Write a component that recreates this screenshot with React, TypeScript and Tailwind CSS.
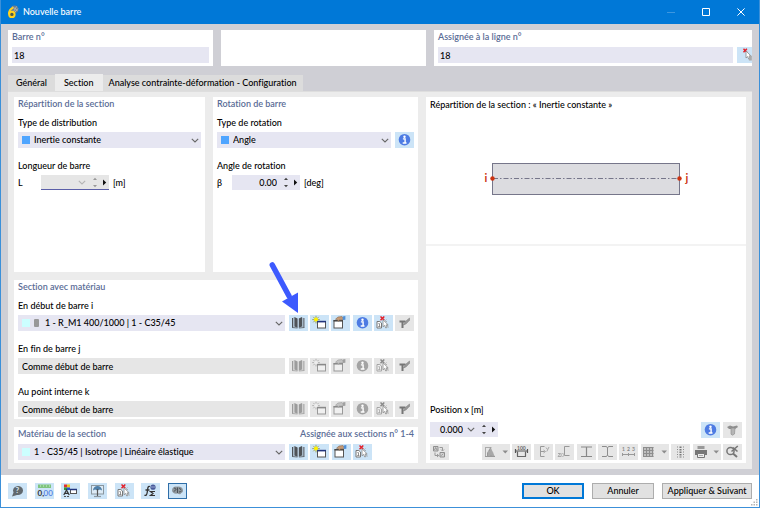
import type { ReactNode } from "react";

type Tone = "on" | "off";

const strong = (t: Tone) => (t === "on" ? "#4f5358" : "#9c9c9c");
const paper = (t: Tone) => (t === "on" ? "#ffffff" : "#f0f0f0");

function Glyph({ children, w = 19 }: { children: ReactNode; w?: number }) {
  return (
    <svg width={w} height={16} viewBox={`0 0 ${w} 16`} fill="none" aria-hidden="true" className="block shrink-0">
      {children}
    </svg>
  );
}

function BookIcon({ tone = "on" as Tone }) {
  const c = strong(tone);
  return (
    <Glyph>
      <path d="M3.5 3v9.5M14.900 3v9.500" stroke={c} strokeWidth="1" />
      <path d="M4.700 2.600v9.500M13.700 2.600v9.500" stroke={c} strokeWidth=".6" opacity=".6" />
      <path d="M5.400 2l3.200 1.400v9.400L5.400 11.400z" fill={c} />
      <path d="M13 2L9.800 3.400v9.400l3.200-1.400z" fill={c} />
      <path d="M3 12.500l5.500.5M15.400 12.500l-5.500.5" stroke={c} strokeWidth=".8" />
    </Glyph>
  );
}

function NewIcon({ tone = "on" as Tone }) {
  const on = tone === "on";
  return (
    <Glyph>
      <path d="M6 .800v7.600M2.200 4.600h7.600M3.300 1.900l5.400 5.400M8.700 1.900L3.300 7.300" stroke={on ? "#8f9440" : "#a5a5a5"} strokeWidth=".8" />
      <rect x="7.500" y="6.500" width="8" height="6.500" fill={paper(tone)} stroke={on ? "#555" : "#999"} />
      <path d="M7 6.600h9" stroke={on ? "#22357e" : "#8a8a8a"} strokeWidth="1.600" />
      <circle cx="6" cy="4.600" r="2" fill={on ? "#fff200" : "#ededed"} />
    </Glyph>
  );
}

function EditIcon({ tone = "on" as Tone }) {
  const on = tone === "on";
  return (
    <Glyph>
      <rect x="3" y="5.500" width="8.500" height="7.500" fill={paper(tone)} stroke={on ? "#555" : "#999"} />
      <path d="M2.500 5.800h9.500" stroke={on ? "#444" : "#8a8a8a"} strokeWidth="1.500" />
      <path d="M4.500 4.200L7 2l4-.4 1.600 1.600-1 1.600-3 .2-1.400 1.200-.8-1.600z" fill={on ? "#c79a74" : "#c4c4c4"} stroke={on ? "#85664e" : "#999"} strokeWidth=".6" />
      <path d="M11.600 1.600l2.800-.6v3.800l-2.600.2z" fill={on ? "#4f8fd6" : "#a0a0a0"} />
    </Glyph>
  );
}

function InfoIcon({ tone = "on" as Tone }) {
  return (
    <Glyph>
      <circle cx="9.500" cy="7.700" r="5.800" fill={tone === "on" ? "#4d7be3" : "#a3a3a3"} />
      <circle cx="9.500" cy="4.700" r="1.200" fill="#fff" />
      <path d="M7.900 6.900h2.200v3.800M7.700 11h3.800" stroke="#fff" strokeWidth="1.400" />
    </Glyph>
  );
}

function Cursor({ x, y }: { x: number; y: number }) {
  return (
    <path
      transform={`translate(${x} ${y})`}
      d="M0 0v7l1.600-1.400 1.200 2.600 1.300-.6L3 5.100h2.200z"
      fill="#fff"
      stroke="#888"
      strokeWidth=".8"
    />
  );
}

function PickIcon({ tone = "on" as Tone }) {
  const on = tone === "on";
  return (
    <Glyph>
      <path d="M3 6.500h2.800L7.500 8v5H3z" fill={paper(tone)} stroke={on ? "#777" : "#a5a5a5"} />
      <path d="M4.300 8.600h1.200v3M4.200 11.500h2.200" stroke={on ? "#777" : "#a5a5a5"} strokeWidth=".8" />
      <path d="M6.500 1.500l3.800 3.800M10.300 1.500L6.500 5.300" stroke={on ? "#e3212b" : "#8a8a8a"} strokeWidth="1.500" />
      <path d="M12.500 4.500l-1.300 1.300M13 6.500h-1.500M13 10l1.500 2.500" stroke="#999" strokeWidth=".7" />
      <Cursor x={9} y={4.800} />
    </Glyph>
  );
}

function AssignIcon() {
  return (
    <Glyph>
      <path d="M6.500 1.800l3.400 3.400M9.900 1.800L6.500 5.200" stroke="#e3212b" strokeWidth="1.500" />
      <Cursor x={9} y={4} />
      <path d="M12.500 8l2.300 1v4.600h-2.900z" fill="#aaa" />
    </Glyph>
  );
}

function TaperIcon() {
  return (
    <Glyph>
      <path d="M4.500 5.500h6v2h-2V13H6.500V7.500h-2z" fill="#767676" />
      <path d="M8.500 10l2-3.600L14.500 3v2.200l-3.300 3.600z" fill="#9a9a9a" stroke="#777" strokeWidth=".5" />
    </Glyph>
  );
}

function Caret() {
  return <path d="M20.500 6.500h5.500l-2.750 3z" fill="#8c8c8c" />;
}

function IconButton({
  label,
  children,
  tone = "on",
  wide = false,
  framed = false,
}: {
  label: string;
  children: ReactNode;
  tone?: Tone;
  wide?: boolean;
  framed?: boolean;
}) {
  return (
    <button
      type="button"
      aria-label={label}
      title={label}
      className={[
        "flex h-4 shrink-0 items-center justify-center overflow-hidden",
        wide ? "w-7" : "w-[19px]",
        tone === "on" ? "bg-[#cce4f7]" : "bg-[#e6e6e6]",
        framed ? "outline outline-1 -outline-offset-1 outline-[#2f6ea8]" : "",
      ].join(" ")}
    >
      {children}
    </button>
  );
}

function Chevron({ faded = false }: { faded?: boolean }) {
  return (
    <svg width="8" height="5" viewBox="0 0 8 5" fill="none" aria-hidden="true" className="shrink-0">
      <path d="M.8.8L4 4 7.200.8" stroke={faded ? "#b4b4b4" : "#666"} strokeWidth="1.100" />
    </svg>
  );
}

function Select({ id, value, swatches, label }: { id: string; value: string; swatches: ReactNode; label?: string }) {
  return (
    <div className="relative h-4 min-w-0 flex-1">
      <select
        id={id}
        aria-label={label}
        className={[
          "block h-4 w-full appearance-none bg-[#e6e6f2] pr-4 leading-4 text-black outline-none",
          id === "section-i" ? "pl-[27px]" : "pl-4",
        ].join(" ")}
      >
        <option>{value}</option>
      </select>
      <span className="pointer-events-none absolute inset-y-0 left-1 flex items-center gap-1">{swatches}</span>
      <span className="pointer-events-none absolute inset-y-0 right-0.5 flex items-center">
        <Chevron />
      </span>
    </div>
  );
}

function Spin({ id, value, dropdown = false, disabled = false }: { id: string; value: string; dropdown?: boolean; disabled?: boolean }) {
  return (
    <div
      className={[
        "flex h-[15px] w-[68px] items-center gap-1 pr-0.5",
        disabled ? "border-b border-[#5b5fa8] bg-[#e6e6e6]" : "bg-[#e6e6f2]",
      ].join(" ")}
    >
      <input
        id={id}
        defaultValue={value}
        disabled={disabled}
        className="h-full w-0 min-w-0 flex-1 bg-transparent text-right outline-none"
      />
      {dropdown && <Chevron faded={disabled} />}
      <svg width="17" height="11" viewBox="0 0 17 11" aria-hidden="true" className="shrink-0">
        <path d="M3 3L5 .8 7 3zM3 8l2 2.200L7 8z" fill={disabled ? "#999" : "#444"} />
        <path d="M13 2.600v6l3.200-3z" fill="#111" />
      </svg>
    </div>
  );
}

const blue = <span className="size-2 bg-[#4fa5ff]" />;
const cyan = <span className="size-2 bg-[#ccffff]" />;

function Heading({ children }: { children: ReactNode }) {
  return <h2 className="h-3.5 font-semibold leading-[14px] text-[#5a6c96]">{children}</h2>;
}

function FieldLabel({ htmlFor, children }: { htmlFor: string; children: ReactNode }) {
  return (
    <label htmlFor={htmlFor} className="mb-0.5 block h-3.5 leading-[14px]">
      {children}
    </label>
  );
}

function SectionTools({ tone }: { tone: Tone }) {
  return (
    <div className="flex w-[125px] shrink-0 justify-between">
      <IconButton label="Bibliothèque" tone={tone}><BookIcon tone={tone} /></IconButton>
      <IconButton label="Nouveau" tone={tone}><NewIcon tone={tone} /></IconButton>
      <IconButton label="Modifier" tone={tone}><EditIcon tone={tone} /></IconButton>
      <IconButton label="Informations" tone={tone}><InfoIcon tone={tone} /></IconButton>
      <IconButton label="Sélectionner" tone={tone}><PickIcon tone={tone} /></IconButton>
      <IconButton label="Variation" tone="off"><TaperIcon /></IconButton>
    </div>
  );
}

function TitleBar() {
  return (
    <header className="flex h-6 shrink-0 items-center bg-[#0078d7] pl-[6px] pr-3.5 text-white">
      <svg width="12" height="14" viewBox="0 0 12 14" fill="none" aria-hidden="true" className="mr-1">
        <circle cx="7.500" cy="4.200" r="3.800" fill="#6d7f8c" />
        <path d="M5.500 1.600l5 4M9.600 1.400l-3 5M11 3.500l-3 3.500" stroke="#b9c4ca" strokeWidth=".7" />
        <path d="M6.300 2.600C3.100 4 1.800 6.600 2 9.400" stroke="#ffd21f" strokeWidth="2" />
        <circle cx="4.900" cy="9.400" r="2.700" stroke="#ffd21f" strokeWidth="2" fill="#4a5a4a" />
      </svg>
      <h1 className="flex-1">Nouvelle barre</h1>
      <div className="flex gap-[27px]">
        <button type="button" aria-label="Réduire" disabled>
          <svg width="8" height="8" viewBox="0 0 8 8"><path d="M0 4.500h8" stroke="#3d97e0" /></svg>
        </button>
        <button type="button" aria-label="Agrandir">
          <svg width="8" height="8" viewBox="0 0 8 8"><path d="M.5.5h7v7h-7z" stroke="#fff" fill="none" /></svg>
        </button>
        <button type="button" aria-label="Fermer">
          <svg width="8" height="8" viewBox="0 0 8 8"><path d="M.4.4l7.200 7.200M7.600.4L.4 7.600" stroke="#fff" /></svg>
        </button>
      </div>
    </header>
  );
}

function Preview() {
  return (
    <section className="flex flex-col bg-white">
      <div className="h-[149px] border-b-2 border-[#f3f3f3] px-1 pt-px">
        <h2 className="leading-[14px]">Répartition de la section : « Inertie constante »</h2>
        <svg viewBox="0 0 312 60" className="mt-[35px] block w-full" role="img" aria-label="Barre i – j">
          <rect x="62.500" y="16.500" width="187" height="31" fill="#dcdce0" stroke="#76768a" />
          <path d="M63 31.500h186" stroke="#76768a" strokeDasharray="5 2 1.500 2" />
          <circle cx="62.500" cy="31.500" r="2.200" fill="#cc3311" />
          <circle cx="249.500" cy="31.500" r="2.200" fill="#cc3311" />
          <text x="54.500" y="35" fontSize="11" fontWeight="700" fill="#cc3311">i</text>
          <text x="255.500" y="35" fontSize="11" fontWeight="700" fill="#cc3311">j</text>
        </svg>
      </div>
      <div className="min-h-0 flex-1" />
      <div className="flex flex-col px-1 pb-[3px]">
        <label htmlFor="position" className="mb-[5px] h-3.5 leading-[14px]">Position x [m]</label>
        <div className="flex">
          <Spin id="position" value="0.000" dropdown />
          <div className="ml-auto flex gap-[3px]">
            <IconButton label="Informations"><InfoIcon /></IconButton>
            <IconButton label="Afficher" tone="off">
              <Glyph>
                <path d="M4 5l3-1.500 3 1 4-1 1 1.500-3 2H6z" fill="#8f8f8f" />
                <path d="M8 6h4l-.500 6-2 1.200-1.500-1z" fill="#b5b5b5" stroke="#888" strokeWidth=".6" />
              </Glyph>
            </IconButton>
          </div>
        </div>
        <div className="mt-1.5 flex justify-between">
          <IconButton label="Échanger" tone="off">
            <Glyph>
              <path d="M3.500 2.500h4.500v4.500H3.500zM10 8.500h4.500V13H10z" stroke="#8f8f8f" fill="#d4d4d4" />
              <path d="M4.500 6l1.200-2.500L7 6M11.200 11.700l2-2" stroke="#888" strokeWidth=".8" />
              <path d="M9.500 3.500h3v3M11 5.500l1.500 1.500L14 5.500M5 8.500v3h3.500M7 10l1.700 1.500L7 13" stroke="#999" />
            </Glyph>
          </IconButton>
          <div className="flex w-[260px] justify-between">
            <IconButton label="Contraintes" tone="off" wide>
              <Glyph w={28}>
                <path d="M3 3.500h6.500M3.500 3v9" stroke="#aaa" />
                <path d="M3 12.500h10" stroke="#999" />
                <path d="M5 12V9l3.500-6 4 9z" fill="#999" />
                <path d="M9 4.500v7M7 7v5M11 8v4" stroke="#c4c4c4" strokeWidth=".7" />
                <Caret />
              </Glyph>
            </IconButton>
            <IconButton label="Dimensions" tone="off">
              <Glyph>
                <text x="5" y="5.500" fontSize="5" fontWeight="700" fill="#666">100</text>
                <path d="M3 7h13M3.500 5v4M15.500 5v4" stroke="#555" strokeWidth="1.200" />
                <path d="M5 12.500h9M5.500 7.500v5M13.500 7.500v5" stroke="#666" strokeWidth="1.200" />
              </Glyph>
            </IconButton>
            <IconButton label="Axes y z" tone="off">
              <Glyph>
                <path d="M10.500 2.500h-4v10h4M6.500 7.500h4" stroke="#999" />
                <path d="M12 3.500l1.300 1.800M15 3l-2.200 4.500M9.500 6l2 1.500-2 1.500" stroke="#999" strokeWidth=".8" />
              </Glyph>
            </IconButton>
            <IconButton label="Axes principaux" tone="off">
              <Glyph>
                <path d="M14.500 2.500H9.500v9h5" stroke="#999" />
                <path d="M3 9.500h2.500L3 12.500h3" stroke="#999" strokeWidth=".8" />
                <circle cx="7.500" cy="11" r="1.500" stroke="#aaa" strokeWidth=".8" />
              </Glyph>
            </IconButton>
            <IconButton label="Profil" tone="off">
              <Glyph><path d="M4 3h11M4 12.500h11M9.500 3v9" stroke="#888" strokeWidth="1.200" /></Glyph>
            </IconButton>
            <IconButton label="Contour" tone="off">
              <Glyph><path d="M4 2.500h4.500l1 1.500 1-1.500H15M4 12.500h4.500l1-1.500 1 1.500H15M9.500 4v7" stroke="#8c8c8c" /></Glyph>
            </IconButton>
            <IconButton label="Numérotation" tone="off">
              <Glyph>
                <path d="M3 10.500h13M3.500 9v3M9.500 9v3M15.500 9v3" stroke="#999" />
                <text x="3" y="7" fontSize="5" fontWeight="700" fill="#888">1</text>
                <text x="8" y="7" fontSize="5" fontWeight="700" fill="#888">2</text>
                <text x="13" y="7" fontSize="5" fontWeight="700" fill="#888">3</text>
              </Glyph>
            </IconButton>
            <IconButton label="Grille" tone="off" wide>
              <Glyph w={28}>
                <path d="M2.500 3h10v10h-10z" fill="#c0c0c0" />
                <path d="M2 3.500h10.500M2 6.500h10.500M2 9.500h10.500M2 12.500h10.500M2.500 3v10M5.500 3v10M8.500 3v10M11.500 3v10" stroke="#8d8d8d" />
                <Caret />
              </Glyph>
            </IconButton>
            <IconButton label="Points" tone="off">
              <Glyph>
                <path d="M9.500 2.500v11" stroke="#777" strokeWidth="2" strokeDasharray="1.500 1" />
                <path d="M6.500 2.500v11M12.500 2.500v11" stroke="#8c8c8c" strokeDasharray="1 1.500" />
              </Glyph>
            </IconButton>
            <IconButton label="Imprimer" tone="off" wide>
              <Glyph w={28}>
                <path d="M4.500 2h7v3h-7z" fill="#999" />
                <path d="M2 6h12v5H2z" fill="#777" />
                <path d="M4.500 9.500h7v4h-7z" fill="#eee" stroke="#777" />
                <path d="M6 11.500h4" stroke="#999" strokeWidth=".8" />
                <Caret />
              </Glyph>
            </IconButton>
            <IconButton label="Réinitialiser le zoom" tone="off">
              <Glyph>
                <circle cx="7.500" cy="7" r="3.600" stroke="#777" strokeWidth="1.500" />
                <path d="M10 9.500l4 3.500" stroke="#777" strokeWidth="2" />
                <path d="M10 3.500l4.500 4M14.800 2L8.500 7.500" stroke="#777" strokeWidth="1.600" />
              </Glyph>
            </IconButton>
          </div>
        </div>
      </div>
    </section>
  );
}

function Footer() {
  return (
    <footer className="relative flex h-8 shrink-0 items-center bg-white px-[7px]">
      <div className="flex w-[179px] justify-between">
        <IconButton label="Aide">
          <Glyph>
            <path d="M4 13.500l1.500-4a5 4.500 0 1 1 3.500 2.500z" fill="#60686e" />
            <text x="7.500" y="10" fontSize="8" fontWeight="700" fill="#dbe8f2">?</text>
          </Glyph>
        </IconButton>
        <IconButton label="Unités">
          <Glyph>
            <rect x="3" y="1.500" width="13" height="3.500" fill="#7fc47f" />
            <path d="M5.500 2v2M8.500 2v2M11.500 2v2M14.500 2v2" stroke="#b7e3b7" strokeWidth=".7" />
            <text x="2.500" y="13" fontSize="8" fontWeight="700" fill="#333">0,</text>
            <text x="8.500" y="13" fontSize="8" fill="#4b78e0">00</text>
          </Glyph>
        </IconButton>
        <IconButton label="Couleurs">
          <Glyph>
            <path d="M3 1.500h3v3H3z" fill="#e03030" /><path d="M6 1.500h3v3H6z" fill="#eac71f" />
            <path d="M3 4.500h3v2.500H3z" fill="#2e9a3c" /><path d="M6 4.500h3v2.500H6z" fill="#2b50c8" />
            <path d="M2.800 12l2.700-5L8.200 12M4 10.300h3" stroke="#333" strokeWidth="1.200" />
            <path d="M3 13.500h6" stroke="#555" strokeDasharray="2 1" />
            <rect x="9.500" y="6.500" width="6" height="4" fill="#fff" stroke="#555" />
            <path d="M9 6.500h7" stroke="#22357e" strokeWidth="1.500" />
          </Glyph>
        </IconButton>
        <IconButton label="Affichage">
          <Glyph>
            <rect x="3.500" y="2.500" width="12" height="8.500" fill="#dceaf5" stroke="#8b979f" />
            <path d="M5 7.500a4.500 4.500 0 0 1 9 0l-2-1-2.500 1-2.500-1z" fill="#4f7fa8" />
            <path d="M9.500 6v7" stroke="#555" strokeWidth="1.200" />
            <path d="M6 13.500h7" stroke="#8b979f" strokeWidth="1.200" />
          </Glyph>
        </IconButton>
        <IconButton label="Sélection"><PickIcon /></IconButton>
        <IconButton label="Fonctions">
          <Glyph>
            <path d="M9 3.500C6.500 2.500 6.800 6 6.300 9S5 13 3.500 12M4.500 7h4" stroke="#333" strokeWidth="1.300" />
            <path d="M14 8.500H9.500l2.500 2-2.500 2H14" stroke="#333" strokeWidth="1.200" />
            <circle cx="12" cy="4.200" r="2.600" fill="#4a5b9a" />
            <path d="M10 4h4" stroke="#a9b6e0" strokeWidth=".8" />
          </Glyph>
        </IconButton>
        <IconButton label="Assistant" framed>
          <Glyph>
            <path d="M4 7.500c0-3 2.500-4.300 5-3.800C12 3 15 4.800 15 7.500c0 2-1.500 2-2.500 3.500-1 .8-2-.2-3-.5C7 11 4 10 4 7.500z" fill="#8d959b" />
            <path d="M6 5.500c1-1 2 0 2 1s-2 1-2 2M9.500 4.500v5.500M11 5.500c1-.5 2 .5 1.500 1.500M11 9c1 0 2-.5 2.500-1" stroke="#454b50" strokeWidth=".9" />
          </Glyph>
        </IconButton>
      </div>
      <div className="ml-auto flex h-4 gap-2">
        <button type="button" className="w-[62px] border-2 border-[#0078d7] bg-[#e1e1e1] leading-3">OK</button>
        <button type="button" className="w-[62px] border border-[#adadad] bg-[#e1e1e1] leading-[14px]">Annuler</button>
        <button type="button" className="w-[90px] whitespace-nowrap border border-[#adadad] bg-[#e1e1e1] leading-[14px]">Appliquer &amp; Suivant</button>
      </div>
      <svg width="7" height="7" viewBox="0 0 7 7" aria-hidden="true" className="absolute bottom-px right-px">
        <path d="M5 0h1.500v1.500H5zM5 2.500h1.500V4H5zM5 5h1.500v1.500H5zM2.500 2.500H4V4H2.500zM2.500 5H4v1.500H2.500zM0 5h1.500v1.500H0z" fill="#b5b5b5" />
      </svg>
    </footer>
  );
}

export default function App() {
  return (
    <div className="flex min-h-screen flex-col border border-t-0 border-[#3c90d9] bg-[#cfcfd5] font-['Lato','Noto_Sans',sans-serif] text-[9px] font-medium text-black [font-variant-ligatures:none]">
      <TitleBar />
      <main className="flex flex-1 flex-col px-[7px] pb-1.5 pt-1.5">
        <div className="grid grid-cols-[205fr_205fr_318fr] gap-2">
          <section className="bg-white px-1 pb-[3px]">
            <label htmlFor="bar" className="mb-[3px] block h-3.5 font-semibold leading-[14px] text-[#5a6c96]">Barre n°</label>
            <input id="bar" defaultValue="18" className="block h-4 w-full bg-[#e6e6f2] px-0.5 outline-none" />
          </section>
          <section className="bg-white" />
          <section className="bg-white pb-[3px] pl-1">
            <label htmlFor="line" className="mb-[3px] block h-3.5 font-semibold leading-[14px] text-[#5a6c96]">Assignée à la ligne n°</label>
            <div className="flex gap-1 overflow-hidden">
              <input id="line" defaultValue="18" className="block h-4 min-w-0 flex-1 bg-[#e6e6f2] px-0.5 outline-none" />
              <div className="w-[15px] overflow-hidden">
                <IconButton label="Sélectionner la ligne"><AssignIcon /></IconButton>
              </div>
            </div>
          </section>
        </div>

        <nav role="tablist" className="mt-2 flex h-[17px] items-end">
          <button type="button" role="tab" aria-selected="false" className="h-4 bg-[#dcdcdc] px-2">Général</button>
          <button type="button" role="tab" aria-selected="true" className="h-[17px] bg-[#ececec] px-[9px]">Section</button>
          <button type="button" role="tab" aria-selected="false" className="h-4 bg-[#dcdcdc] px-1.5">Analyse contrainte-déformation - Configuration</button>
        </nav>

        <div className="grid flex-1 grid-cols-[404fr_320fr] gap-2 border-t border-[#dedede] bg-[#ececec] px-1.5 pb-1.5 pt-[5px]">
          <div className="flex flex-col gap-2">
            <div className="grid flex-1 grid-cols-[191fr_205fr] gap-2">
              <section className="bg-white px-1">
                <Heading>Répartition de la section</Heading>
                <div className="mt-[5px]">
                  <FieldLabel htmlFor="distribution">Type de distribution</FieldLabel>
                  <div className="flex"><Select id="distribution" value="Inertie constante" swatches={blue} /></div>
                </div>
                <div className="mt-[11px]">
                  <FieldLabel htmlFor="length">Longueur de barre</FieldLabel>
                  <div className="flex items-center">
                    <span className="w-[23px]">L</span>
                    <Spin id="length" value="" dropdown disabled />
                    <span className="ml-1">[m]</span>
                  </div>
                </div>
              </section>
              <section className="bg-white px-1">
                <Heading>Rotation de barre</Heading>
                <div className="mt-[5px]">
                  <FieldLabel htmlFor="rotation">Type de rotation</FieldLabel>
                  <div className="flex gap-1">
                    <Select id="rotation" value="Angle" swatches={blue} />
                    <IconButton label="Informations"><InfoIcon /></IconButton>
                  </div>
                </div>
                <div className="mt-[11px]">
                  <FieldLabel htmlFor="angle">Angle de rotation</FieldLabel>
                  <div className="flex items-center">
                    <span className="w-[15px]">β</span>
                    <Spin id="angle" value="0.00" />
                    <span className="ml-1">[deg]</span>
                  </div>
                </div>
              </section>
            </div>

            <section className="bg-white px-1 pb-0.5">
              <Heading>Section avec matériau</Heading>
              <div className="mt-[5px]">
                <FieldLabel htmlFor="section-i">En début de barre i</FieldLabel>
                <div className="flex gap-1">
                  <Select
                    id="section-i"
                    value="1 - R_M1 400/1000 | 1 - C35/45"
                    swatches={<>{cyan}<span className="h-2 w-[5px] rounded-[1px] bg-[#999]" /></>}
                  />
                  <div className="relative">
                    <SectionTools tone="on" />
                    <svg width="33" height="51" viewBox="0 0 33 51" aria-hidden="true" className="pointer-events-none absolute bottom-full left-[-20px] mb-0.5">
                      <path d="M3.300 3L20 34" stroke="#3d5afe" strokeWidth="5.500" strokeLinecap="round" />
                      <path d="M13 39.500L29 30.500V51z" fill="#3d5afe" />
                    </svg>
                  </div>
                </div>
              </div>
              <div className="mt-[11px]">
                <FieldLabel htmlFor="section-j">En fin de barre j</FieldLabel>
                <div className="flex gap-1">
                  <input id="section-j" disabled defaultValue="Comme début de barre" className="h-4 min-w-0 flex-1 bg-[#e6e6e6] px-1" />
                  <SectionTools tone="off" />
                </div>
              </div>
              <div className="mt-[11px]">
                <FieldLabel htmlFor="section-k">Au point interne k</FieldLabel>
                <div className="flex gap-1">
                  <input id="section-k" disabled defaultValue="Comme début de barre" className="h-4 min-w-0 flex-1 bg-[#e6e6e6] px-1" />
                  <SectionTools tone="off" />
                </div>
              </div>
            </section>

            <section className="bg-white px-1 pb-[3px]">
              <div className="mb-[3px] flex justify-between">
                <Heading>Matériau de la section</Heading>
                <p className="font-semibold leading-[14px] text-[#5a6c96]">Assignée aux sections n° 1-4</p>
              </div>
              <div className="flex gap-1">
                <Select id="material" label="Matériau de la section" value="1 - C35/45 | Isotrope | Linéaire élastique" swatches={cyan} />
                <div className="flex w-[125px] shrink-0">
                  <div className="flex w-[83px] justify-between">
                    <IconButton label="Bibliothèque"><BookIcon /></IconButton>
                    <IconButton label="Nouveau"><NewIcon /></IconButton>
                    <IconButton label="Modifier"><EditIcon /></IconButton>
                    <IconButton label="Sélectionner"><PickIcon /></IconButton>
                  </div>
                </div>
              </div>
            </section>
          </div>
          <Preview />
        </div>
      </main>
      <Footer />
    </div>
  );
}
